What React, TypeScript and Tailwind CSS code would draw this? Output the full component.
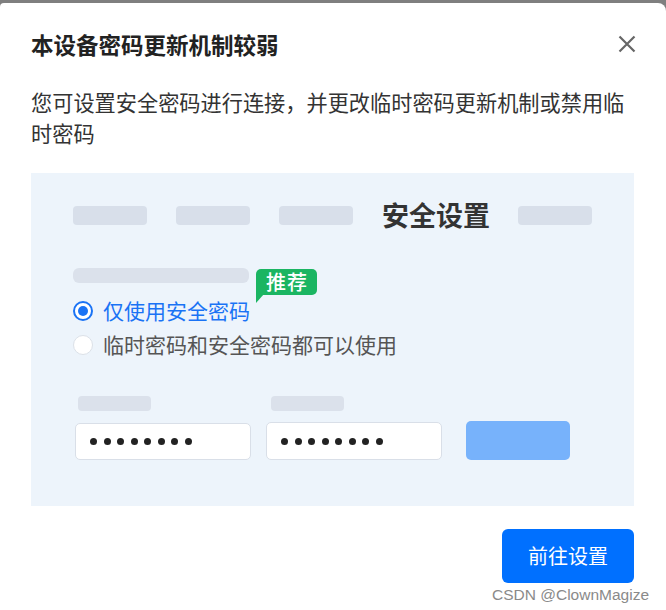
import React from "react";

const cjk = { fontFamily: '"Noto Sans CJK SC", "Noto Sans", sans-serif' };

function Dots() {
  return (
    <div className="flex items-center gap-[6.5px]">
      {[0, 1, 2, 3, 4, 5, 6, 7].map((i) => (
        <div key={i} className="w-[7px] h-[7px] rounded-full bg-[#222]" />
      ))}
    </div>
  );
}

export default function App() {
  return (
    <div className="relative w-[666px] h-[610px] overflow-hidden bg-[#7f7f7f] pt-[3px]" style={cjk}>
      <div className="h-full bg-white rounded-tl-[4px] rounded-tr-[8px] pl-[31px] pr-[32px] pt-[26px]">
        <div className="flex items-center justify-between h-[30px]">
          <div className="text-[22.5px] leading-[30px] font-bold text-[#222]">本设备密码更新机制较弱</div>
          <svg width="18" height="18" viewBox="0 0 18 18" className="mr-[-2px]">
            <path d="M1.5 1.5 L16.5 16.5 M16.5 1.5 L1.5 16.5" stroke="#666" strokeWidth="2.2" strokeLinecap="butt" />
          </svg>
        </div>
        <p className="mt-[27px] text-[21.2px] leading-[31px] text-[#333] pr-[6px]">
          您可设置安全密码进行连接，并更改临时密码更新机制或禁用临时密码
        </p>
        <div className="mt-[25px] h-[333px] bg-[#EDF4FB] pl-[42px] pt-[27px]">
          <div className="flex items-center gap-[29px] h-[30px]">
            <div className="w-[74px] h-[19px] rounded-[4px] bg-[#D8DFEA]" />
            <div className="w-[74px] h-[19px] rounded-[4px] bg-[#D8DFEA]" />
            <div className="w-[74px] h-[19px] rounded-[4px] bg-[#D8DFEA]" />
            <div className="text-[27px] leading-[30px] font-bold text-[#333] w-[107px] whitespace-nowrap">安全设置</div>
            <div className="w-[74px] h-[19px] rounded-[4px] bg-[#D8DFEA]" />
          </div>
          <div className="relative mt-[38px] w-[176px] h-[15px] rounded-[6px] bg-[#DBE1EB]">
            <div className="absolute left-[183px] top-[1px] w-[61px] h-[26px] rounded-[5px] rounded-bl-none bg-[#1BB562] flex items-center justify-center text-white text-[20px] leading-[26px] font-medium tracking-[1px] pl-[1px]">
              推荐
              <svg width="8" height="10" viewBox="0 0 8 10" className="absolute left-0 top-[25px]">
                <path d="M0 0 L8 0 L0 9 Z" fill="#1BB562" />
              </svg>
            </div>
          </div>
          <div className="mt-[13px] flex flex-col gap-[4px]">
            <div className="flex items-center h-[30px] gap-[10px]">
              <div className="w-[20px] h-[20px] rounded-full border-2 border-[#1A73F5] bg-white flex items-center justify-center">
                <div className="w-[10px] h-[10px] rounded-full bg-[#1A73F5]" />
              </div>
              <span className="text-[21px] leading-[30px] text-[#1A73F5] -mt-[2px]">仅使用安全密码</span>
            </div>
            <div className="flex items-center h-[30px] gap-[10px]">
              <div className="w-[20px] h-[20px] rounded-full border border-[#DCE1E8] bg-white" />
              <span className="text-[21px] leading-[30px] text-[#555] -mt-[2px]">临时密码和安全密码都可以使用</span>
            </div>
          </div>
          <div className="mt-[36px] ml-[2px] flex items-end">
            <div className="flex flex-col">
              <div className="ml-[3px] w-[73px] h-[15px] rounded-[4px] bg-[#DBE1EB]" />
              <div className="mt-[12px] w-[176px] h-[37px] rounded-[5px] border border-[#D9DFE8] bg-white flex items-center pl-[14px]">
                <Dots />
              </div>
            </div>
            <div className="ml-[15px] flex flex-col">
              <div className="ml-[5px] w-[73px] h-[15px] rounded-[4px] bg-[#DBE1EB]" />
              <div className="mt-[11px] w-[176px] h-[38px] rounded-[5px] border border-[#D9DFE8] bg-white flex items-center pl-[14px]">
                <Dots />
              </div>
            </div>
            <div className="ml-[24px] w-[104px] h-[39px] rounded-[5px] bg-[#77B2FB]" />
          </div>
        </div>
        <div className="mt-[23px] flex justify-end">
          <div className="w-[132px] h-[54px] rounded-[6px] bg-[#0070FF] text-white text-[20px] flex items-center justify-center">
            前往设置
          </div>
        </div>
      </div>
      <div
        className="absolute left-[492px] top-[583px] text-[15.5px] text-[#8a8a8a]"
        style={{ fontFamily: '"Liberation Sans", Arial, sans-serif', textShadow: "0 0 2px #fff, 0 0 2px #fff" }}
      >
        CSDN @ClownMagize
      </div>
    </div>
  );
}
